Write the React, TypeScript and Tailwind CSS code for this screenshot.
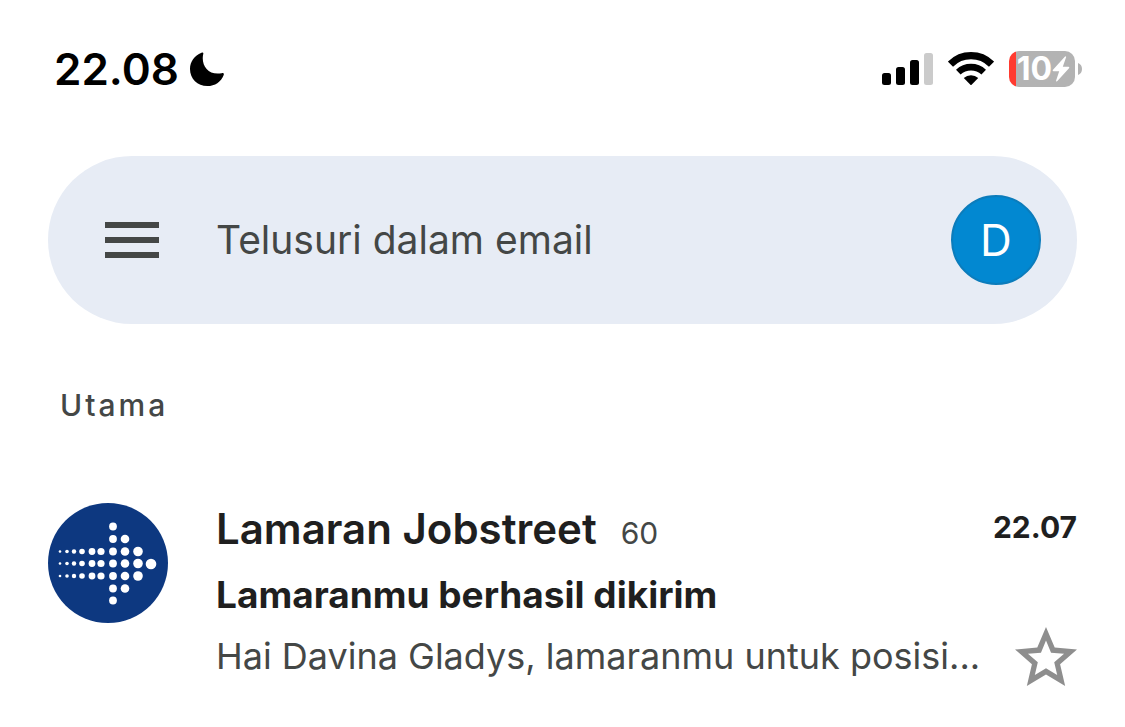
/**
 * App.tsx
 *
 * Mobile inbox: status bar, search bar and the primary mail list
 */
import React from "react";

interface Mail {
  sender: string;
  count: number;
  time: string;
  subject: string;
  preview: string;
}

const mails: Mail[] = [
  {
    sender: "Lamaran Jobstreet",
    count: 60,
    time: "22.07",
    subject: "Lamaranmu berhasil dikirim",
    preview: "Hai Davina Gladys, lamaranmu untuk posisi...",
  },
];

// [cx, cy, r] in a 120 x 120 box
const tail = [
  [12, 1.3],
  [19, 1.8],
  [26, 2.2],
  [34, 2.8],
  [44, 3.4],
  [53, 3.6],
  [65, 3.9],
  [77, 4.3],
  [90, 4.8],
];
const logoDots = [
  ...[48.5, 60.5, 73].flatMap((y) => tail.map(([x, r]) => [x, y, r])),
  [65, 23.5, 3.9],
  [65, 36, 3.9],
  [77, 36, 4.3],
  [103, 61, 5.3],
  [65, 85.5, 3.9],
  [77, 85.5, 4.3],
  [65, 97.5, 3.9],
];

const StatusBar: React.FC = () => {
  return (
    <div className="flex h-14 items-center justify-between pl-[54px] pr-[43px]">
      <div className="flex items-center gap-[11px] text-black">
        <span className="text-[44px] leading-none font-semibold">22.08</span>
        <svg className="size-[34px]" viewBox="0 0 34 34" aria-hidden="true">
          <path
            d="M11.5.7C12.6.2 13.6.5 13.3 1.7 10.6 12.8 18 23.9 31.7 21.2c1.6-.4 2.5.4 2 1.7C31 29.8 25 34 17.3 34 7.5 34 0 26.7 0 17 0 9.600 4.300 3.500 11.500.700Z"
            fill="currentColor"
          />
        </svg>
      </div>
      <div className="flex items-center gap-[15px]">
        <svg className="h-8 w-[51px]" viewBox="0 0 51 32" aria-hidden="true">
          <rect x="0" y="20" width="9" height="12" rx="2.500" />
          <rect x="14" y="14" width="9" height="18" rx="2.500" />
          <rect x="28" y="7" width="9" height="25" rx="2.500" />
          <rect x="42" y="0" width="9" height="32" rx="2.500" fill="#cbcbcb" />
        </svg>
        <svg className="h-[34px] w-[46px]" viewBox="0 0 46 34" aria-hidden="true">
          <path d="M2.500 12.200A29 29 0 0 1 43.500 12.200" fill="none" stroke="#000" strokeWidth="7.200" />
          <path d="M10.300 20.200A18.500 18.500 0 0 1 35.700 20.200" fill="none" stroke="#000" strokeWidth="6.600" />
          <path d="M15.800 26.100A10.400 10.400 0 0 1 30.200 26.100L23.600 32.700Q23 33.300 22.400 32.700Z" />
        </svg>
        <div className="flex items-center gap-[3px]">
          <div className="flex h-9 w-[66px] items-center justify-end rounded-[10px] bg-linear-to-r from-[#ff3b30] from-[7px] to-[#b3b3b3] to-[7px] pr-[5px] text-white">
            <span className="text-[32px] leading-9 font-bold">10</span>
            <svg className="h-[26px] w-[18px]" viewBox="0 0 18 26" aria-hidden="true">
              <path
                d="M12.800.8 1 13.800c-.6.7-.3 1.400.6 1.400h5.600L4.200 24.300c-.4 1.300.4 1.600 1.200.8L17 12.200c.6-.7.3-1.400-.6-1.400h-5.600L14 1.600C14.500.2 13.600-.1 12.800.8Z"
                fill="currentColor"
              />
            </svg>
          </div>
          <svg className="h-3 w-1" viewBox="0 0 4 12" aria-hidden="true">
            <path d="M0 0Q4 1.500 4 6T0 12Z" fill="#b3b3b3" />
          </svg>
        </div>
      </div>
    </div>
  );
};

const SearchBar: React.FC = () => {
  return (
    <form role="search" className="mx-12 mt-[59px] flex h-[168px] items-center rounded-full bg-[#e7ecf5] pr-9 pl-[57px]">
      <button type="button" aria-label="Menu" className="shrink-0">
        <svg className="h-9 w-[54px]" viewBox="0 0 54 36" fill="#444746" aria-hidden="true">
          <path d="M0 0h54v6H0zM0 15h54v6H0zM0 30h54v6H0z" />
        </svg>
      </button>
      <input
        type="search"
        aria-label="Telusuri dalam email"
        placeholder="Telusuri dalam email"
        className="ml-[57px] min-w-0 flex-1 bg-transparent text-[39px] leading-[56px] text-[#444746] outline-none placeholder:text-[#444746] placeholder:opacity-100"
      />
      <button
        type="button"
        className="size-[90px] shrink-0 rounded-full border-2 border-[#0c7cbb] bg-[#0288d1] text-[44px] leading-none text-white"
      >
        D
      </button>
    </form>
  );
};

const MailRow: React.FC<{ mail: Mail }> = ({ mail }) => {
  return (
    <li className="flex items-start gap-[48px] pr-12 pl-12">
      <svg className="size-[120px] shrink-0" viewBox="0 0 120 120" aria-hidden="true">
        <circle cx="60" cy="60" r="60" fill="#0d3880" />
        {logoDots.map(([x, y, r]) => (
          <circle key={`${x}-${y}`} cx={x} cy={y} r={r} fill="#fff" />
        ))}
      </svg>
      <div className="min-w-0 flex-1 text-[#1f1f1f]">
        <div className="flex h-[52px] items-start justify-between">
          <div className="flex min-w-0 items-baseline gap-6 leading-[52px]">
            <h3 className="truncate text-[42px] font-semibold">{mail.sender}</h3>
            <span className="text-[30px] text-[#444746]">{mail.count}</span>
          </div>
          <time className="text-[30px] leading-12 font-bold">{mail.time}</time>
        </div>
        <p className="mt-[14px] truncate text-[37px] leading-[52px] font-bold">{mail.subject}</p>
        <div className="mt-[5px] flex items-center justify-between gap-5">
          <p className="truncate text-[36px] leading-[60px] text-[#444746]">{mail.preview}</p>
          <button type="button" aria-label="Star" className="shrink-0">
            <svg className="h-[59px] w-[62px]" viewBox="2 2 20 19" fill="#8e8e8e" aria-hidden="true">
              <path
                d="M22 9.240l-7.190-.62L12 2 9.190 8.630 2 9.240l5.460 4.730L5.820 21 12 17.270 18.180 21l-1.630-7.030L22 9.240zM12 15.300l-3.600 2.180.96-4.110-3.180-2.760 4.200-.36L12 6.300l1.630 3.950 4.200.36-3.180 2.760.96 4.110L12 15.300z"
                fillRule="evenodd"
              />
            </svg>
          </button>
        </div>
      </div>
    </li>
  );
};

const App: React.FC = () => {
  return (
    <div className="min-h-screen bg-white pt-[41px] font-['Inter',sans-serif]">
      <StatusBar />
      <SearchBar />
      <main>
        <h2 className="mt-[61px] pl-[60px] text-[30px] leading-10 font-medium tracking-widest text-[#444746]">Utama</h2>
        <ul className="mt-[78px]">
          {mails.map((mail) => (
            <MailRow key={mail.subject} mail={mail} />
          ))}
        </ul>
      </main>
    </div>
  );
};

export default App;
